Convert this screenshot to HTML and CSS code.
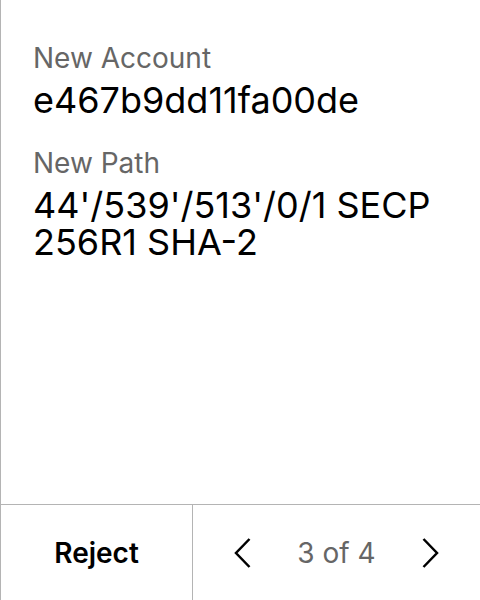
FILE: index.html
```html
<!DOCTYPE html>
<html>
<head>
<meta charset="utf-8">
<link rel="stylesheet" href="styles.css">
</head>
<body>
<div class="screen">
  <main class="content">
    <div class="field">
      <div class="label">New Account</div>
      <div class="value">e467b9dd11fa00de</div>
    </div>
    <div class="field">
      <div class="label">New Path</div>
      <div class="value">44'/539'/513'/0/1 SECP 256R1 SHA-2</div>
    </div>
  </main>
  <footer class="footer">
    <div class="reject">Reject</div>
    <div class="pager">
      <svg class="chev" width="17" height="30" viewBox="0 0 17 30"><path d="M15.5 1 L2 15 L15.5 29" fill="none" stroke="#000" stroke-width="2.5"/></svg>
      <span class="count">3 of 4</span>
      <svg class="chev" width="17" height="30" viewBox="0 0 17 30"><path d="M1.5 1 L15 15 L1.5 29" fill="none" stroke="#000" stroke-width="2.5"/></svg>
    </div>
  </footer>
</div>
</body>
</html>
```
FILE: styles.css
```css
html, body { margin: 0; padding: 0; background: #fff; }
body { font-family: Inter, "Noto Sans", sans-serif; }
.screen {
  width: 480px; height: 600px; box-sizing: border-box;
  border-left: 1px solid #b4b4b4;
  display: flex; flex-direction: column;
}
.content { flex: 1; padding: 41px 16px 0 32px; }
.field + .field { margin-top: 27px; }
.label { font-size: 28px; color: #666; line-height: 34px; }
.value { font-size: 36px; color: #000; line-height: 37px; margin-top: 7px; }
.footer {
  height: 96px; box-sizing: border-box; border-top: 1px solid #b4b4b4;
  display: flex;
}
.reject {
  width: 192px; box-sizing: border-box; border-right: 1px solid #b4b4b4;
  display: flex; align-items: center; justify-content: center;
  font-size: 28px; font-weight: 600; color: #000;
}
.pager { flex: 1; display: flex; align-items: center; justify-content: center; gap: 46px; }
.count { font-size: 28px; color: #666; }
.chev { display: block; }
```
